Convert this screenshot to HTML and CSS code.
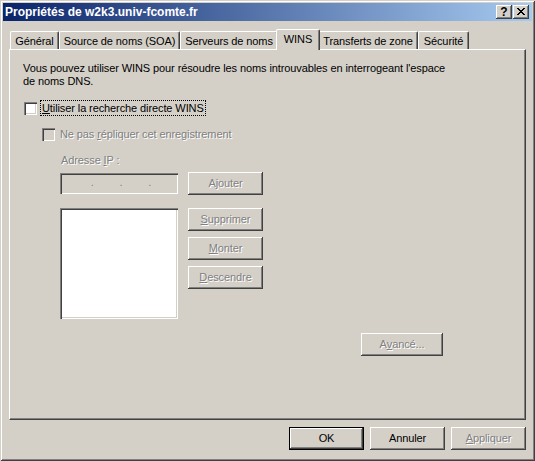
FILE: index.html
```html
<!DOCTYPE html>
<html lang="fr">
<head>
<meta charset="utf-8">
<title>Propriétés de w2k3.univ-fcomte.fr</title>
<link rel="stylesheet" href="styles.css">
</head>
<body>
<div class="window">
  <div class="titlebar">
    <span class="title">Propriétés de w2k3.univ-fcomte.fr</span>
    <div class="tb-buttons">
      <span class="tb-btn help">?</span>
      <span class="tb-btn close"><svg width="8" height="7" viewBox="0 0 8 7"><path d="M0 0h2v1h-2zM6 0h2v1h-2zM1 1h2v1h-2zM5 1h2v1h-2zM2 2h4v1h-4zM3 3h2v1h-2zM2 4h4v1h-4zM1 5h2v1h-2zM5 5h2v1h-2zM0 6h2v1h-2zM6 6h2v1h-2z" fill="#000"/></svg></span>
    </div>
  </div>
  <div class="client">
    <div class="tabs">
      <span class="tab t1">Général</span>
      <span class="tab t2">Source de noms (SOA)</span>
      <span class="tab t3">Serveurs de noms</span>
      <span class="tab t4 selected">WINS</span>
      <span class="tab t5">Transferts de zone</span>
      <span class="tab t6">Sécurité</span>
    </div>
    <div class="panel">
      <p class="desc">Vous pouvez utiliser WINS pour résoudre les noms introuvables en interrogeant l'espace<br>de noms DNS.</p>
      <div class="check-row first">
        <span class="checkbox"></span>
        <span class="label focus"><u>U</u>tiliser la recherche directe WINS</span>
      </div>
      <div class="check-row second">
        <span class="checkbox disabled"></span>
        <span class="label dis">Ne pas <u>r</u>épliquer cet enregistrement</span>
      </div>
      <div class="ip-label dis">Adresse <u>I</u>P :</div>
      <div class="ip-row">
        <div class="field ip"><span>.</span><span>.</span><span>.</span></div>
        <span class="btn dis">Ajouter</span>
      </div>
      <div class="list-row">
        <div class="field list"></div>
        <div class="btn-col">
          <span class="btn dis"><u>S</u>upprimer</span>
          <span class="btn dis"><u>M</u>onter</span>
          <span class="btn dis"><u>D</u>escendre</span>
        </div>
      </div>
      <div class="adv-row">
        <span class="btn wide dis">A<u>v</u>ancé...</span>
      </div>
    </div>
    <div class="footer">
      <span class="btn default">OK</span>
      <span class="btn">Annuler</span>
      <span class="btn dis"><u>A</u>ppliquer</span>
    </div>
  </div>
</div>
</body>
</html>
```
FILE: styles.css
```css
* { box-sizing: border-box; }
html, body { margin: 0; padding: 0; }
body {
  width: 535px;
  height: 461px;
  overflow: hidden;
  background: #d4d0c8;
  font-family: "Liberation Sans", Arial, sans-serif;
  font-size: 11px;
  letter-spacing: -0.1px;
  color: #000;
}
.window {
  width: 535px;
  height: 461px;
  background: #d4d0c8;
  box-shadow: inset 1px 1px 0 #d4d0c8, inset -1px -1px 0 #404040, inset 2px 2px 0 #fff, inset -2px -2px 0 #808080;
  padding: 3px 3px 4px 3px;
  display: flex;
  flex-direction: column;
}
.titlebar {
  height: 18px;
  background: linear-gradient(to right, #0a246a, #a6caf0);
  display: flex;
  align-items: center;
  justify-content: space-between;
  padding: 0 3px 0 2px;
}
.title {
  color: #fff;
  font-weight: bold;
  font-size: 12px;
  letter-spacing: 0;
  font-family: "Liberation Sans", Arial, sans-serif;
}
.tb-buttons { display: flex; gap: 1px; }
.tb-btn {
  width: 16px;
  height: 14px;
  background: #d4d0c8;
  box-shadow: inset -1px -1px 0 #404040, inset 1px 1px 0 #fff, inset -2px -2px 0 #808080;
  display: flex;
  align-items: center;
  justify-content: center;
}
.tb-btn.help {
  font-weight: bold;
  font-size: 12px;
  line-height: 14px;
  letter-spacing: 0;
  padding-bottom: 1px;
}
.tb-btn.close svg { display: block; margin-top: -1px; }
.client {
  flex: 1;
  display: flex;
  flex-direction: column;
  padding: 8px 6px 0 6px;
}
.tabs {
  display: flex;
  height: 20px;
  padding-left: 1px;
  position: relative;
  z-index: 2;
  align-items: flex-end;
}
.tab {
  height: 18px;
  line-height: 16px;
  text-align: center;
  white-space: nowrap;
  border-top: 1px solid #fff;
  border-left: 1px solid #fff;
  border-right: 1px solid #404040;
  box-shadow: inset -1px 0 0 #808080;
  border-top-left-radius: 2px;
  border-top-right-radius: 2px;
  background: #d4d0c8;
  padding-top: 1px;
}
.t1 { width: 49px; }
.t2 { width: 121px; }
.t3 { width: 98px; }
.t4 { width: 40px; }
.t5 { width: 100px; position: relative; z-index: 1; }
.t6 { width: 51px; }
.tab.selected {
  width: 44px;
  height: 21px;
  margin: 0 -2px -1px -2px;
  position: relative;
  z-index: 3;
  padding-top: 1px;
  line-height: 17px;
}
.panel {
  height: 371px;
  border-top: 1px solid #fff;
  border-left: 1px solid #fff;
  border-right: 1px solid #404040;
  border-bottom: 1px solid #404040;
  box-shadow: inset -1px -1px 0 #808080;
  padding: 12px 0 0 13px;
  display: flex;
  flex-direction: column;
  align-items: flex-start;
  position: relative;
  z-index: 1;
}
.desc {
  margin: 0;
  line-height: 13px;
}
.check-row {
  display: flex;
  align-items: center;
  height: 16px;
}
.check-row.first { margin-top: 12px; margin-left: 1px; }
.check-row.second { margin-top: 10px; margin-left: 19px; }
.checkbox {
  width: 13px;
  height: 13px;
  background: #fff;
  box-shadow: inset 1px 1px 0 #808080, inset 2px 2px 0 #404040, inset -1px -1px 0 #fff, inset -2px -2px 0 #d4d0c8;
  margin-right: 4px;
}
.checkbox.disabled { background: #d4d0c8; }
.label { padding: 0 1px; line-height: 14px; }
.label.focus { outline: 1px dotted #000; outline-offset: 0; }
.dis { color: #808080; text-shadow: 1px 1px 0 #fff; }
.ip-label {
  margin-top: 12px;
  margin-left: 38px;
  line-height: 13px;
}
.ip-row {
  display: flex;
  gap: 10px;
  margin-top: 5px;
  margin-left: 37px;
  align-items: flex-start;
}
.field {
  width: 118px;
  box-shadow: inset 1px 1px 0 #808080, inset 2px 2px 0 #404040, inset -1px -1px 0 #fff, inset -2px -2px 0 #d4d0c8;
}
.field.ip {
  height: 21px;
  margin-top: 1px;
  background: #d4d0c8;
  display: flex;
  justify-content: space-around;
  padding: 0 14px 0 18px;
  line-height: 18px;
  color: #808080;
}
.field.list {
  height: 111px;
  background: #fff;
}
.list-row {
  display: flex;
  gap: 10px;
  margin-top: 13px;
  margin-left: 37px;
  align-items: flex-start;
}
.btn-col {
  display: flex;
  flex-direction: column;
  gap: 6px;
}
.btn {
  width: 75px;
  height: 23px;
  display: flex;
  align-items: center;
  justify-content: center;
  background: #d4d0c8;
  box-shadow: inset -1px -1px 0 #404040, inset 1px 1px 0 #fff, inset -2px -2px 0 #808080;
  padding-bottom: 1px;
}
.btn.wide { width: 82px; }
.adv-row {
  margin-top: 14px;
  margin-left: 338px;
}
.footer {
  display: flex;
  justify-content: flex-end;
  gap: 6px;
  margin-top: 7px;
}
.btn.default {
  border: 1px solid #000;
}
u { text-decoration: underline; text-underline-offset: 1px; }
```
